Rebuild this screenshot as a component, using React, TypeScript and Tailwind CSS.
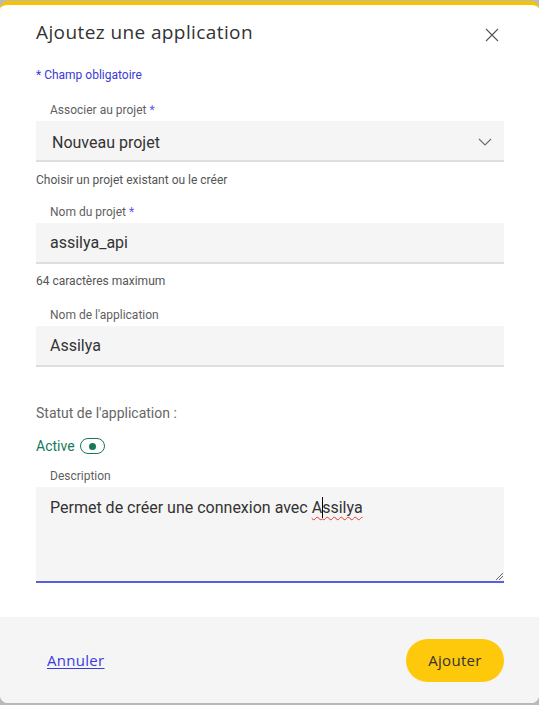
import React from "react";

const body = { fontFamily: "Roboto, 'Noto Sans', sans-serif" };
const head = { fontFamily: "'Open Sans', 'Noto Sans', sans-serif" };

function Label({ text, required }: { text: string; required?: boolean }) {
  return (
    <div className="ml-[14px] text-[12px] leading-4 text-[#5f5f5f]">
      {text}
      {required && <span className="text-[#5b5be6]"> *</span>}
    </div>
  );
}

function Field({ value, chevron }: { value: string; chevron?: boolean }) {
  return (
    <div className="mt-[3px] flex h-[41px] items-center justify-between border-b-2 border-[#dedede] bg-[#f5f5f5] pl-[14px] pr-[12px]">
      <span className={`text-[16px] text-[#333] ${chevron ? "ml-[2px] mt-[5px]" : ""}`}>{value}</span>
      {chevron && (
        <svg width="14" height="8" viewBox="0 0 14 8" fill="none" className="mt-[3px]">
          <path d="M1 1 L7 7 L13 1" stroke="#6b6b6b" strokeWidth="1.1" />
        </svg>
      )}
    </div>
  );
}

export default function App() {
  return (
    <div className="w-[539px] h-[705px] bg-[#b9b9b9] pt-px pb-[2px]" style={body}>
      <div className="flex h-[702px] flex-col overflow-hidden rounded-lg border-t-4 border-[#f6c500] bg-white">
        <div className="flex-1 pl-[36px] pr-[35px] pt-[13px]">
          <div className="flex h-[28px] items-center justify-between">
            <h1 className="text-[19px] font-medium leading-7 tracking-[0.4px] text-[#333]" style={head}>
              Ajoutez une application
            </h1>
            <svg width="14" height="14" viewBox="0 0 14 14" className="mr-[5px] mt-[5px]">
              <path d="M1 1 L13 13 M13 1 L1 13" stroke="#555" strokeWidth="1.1" />
            </svg>
          </div>

          <div className="mt-[21px] text-[12px] leading-4 text-[#3a3ad6]">* Champ obligatoire</div>

          <div className="mt-[19px]">
            <Label text="Associer au projet" required />
            <Field value="Nouveau projet" chevron />
          </div>
          <div className="mt-[10px] text-[12px] leading-4 text-[#555]">Choisir un projet existant ou le créer</div>

          <div className="mt-[16px]">
            <Label text="Nom du projet" required />
            <Field value="assilya_api" />
          </div>
          <div className="mt-[9px] text-[12px] leading-4 text-[#555]">64 caractères maximum</div>

          <div className="mt-[18px]">
            <Label text="Nom de l'application" />
            <Field value="Assilya" />
          </div>

          <div className="mt-[36px] text-[14px] leading-5 text-[#666]">Statut de l'application :</div>

          <div className="mt-[13px] flex h-5 items-center gap-[5px]">
            <span className="text-[14px] text-[#167a56]">Active</span>
            <span className="flex h-[16px] w-[25px] items-center justify-center rounded-full border-[1.5px] border-[#167a56]">
              <span className="h-[7px] w-[7px] rounded-full bg-[#167a56]" />
            </span>
          </div>

          <div className="mt-[12px]">
            <Label text="Description" />
            <div className="relative mt-[3px] h-[96px] border-b-2 border-[#5a5ee0] bg-[#f5f5f5] pl-[14px] pt-[11px]">
              <div className="text-[16px] leading-5 text-[#333]">
                Permet de créer une connexion avec{" "}
                <span className="relative underline decoration-wavy decoration-[#e33] decoration-1 underline-offset-[3px]">
                  A
                  <span className="absolute left-[10px] top-[-1px] h-[21px] w-px bg-black" />
                  ssilya
                </span>
              </div>
              <svg width="8" height="8" viewBox="0 0 8 8" className="absolute bottom-[1px] right-[1px]">
                <path d="M1 8 L8 1 M4 8 L8 4" stroke="#666" strokeWidth="1" />
              </svg>
            </div>
          </div>
        </div>

        <div className="flex h-[86px] items-center justify-between bg-[#f5f5f5] pl-[47px] pr-[35px]" style={head}>
          <a className="text-[15px] tracking-[0.3px] text-[#3b3bdc] underline underline-offset-2">Annuler</a>
          <button className="h-[43px] w-[98px] rounded-full bg-[#fec90a] text-[15px] tracking-[0.3px] text-[#333]">Ajouter</button>
        </div>
      </div>
    </div>
  );
}
